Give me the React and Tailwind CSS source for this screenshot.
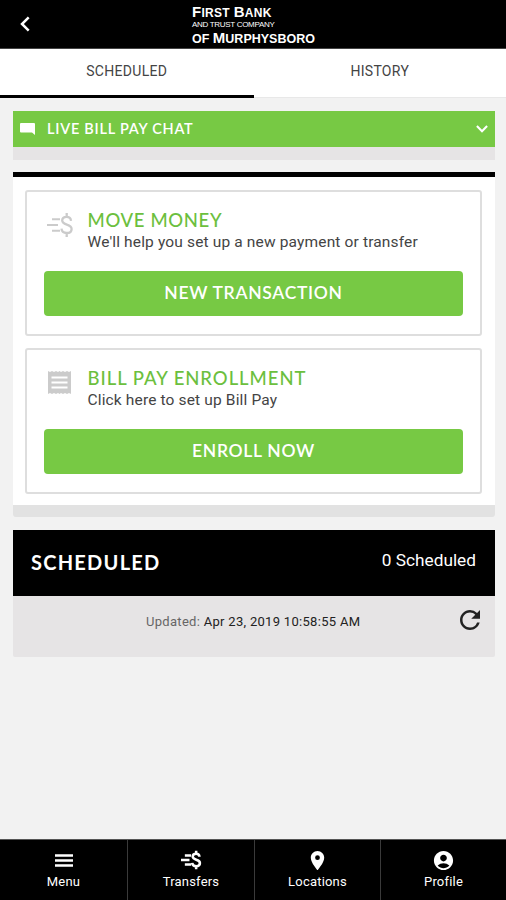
import React from "react";
import { MdRefresh, MdLocationOn, MdAccountCircle } from "react-icons/md";

const TransferIcon = ({ className, bold }) => (
  <svg viewBox="0 0 28 26" className={className} fill="none" stroke="currentColor">
    <path d="M6 7.2h8M1 13h11M6 18.8h8" strokeWidth={bold ? 3.2 : 1.9} />
    <path
      d="M25 8.800C24.800 6.200 23.100 4.900 20.600 4.900c-2.600 0-4.400 1.400-4.400 3.700 0 5.200 9.400 2.900 9.400 8.300 0 2.500-2 4.100-4.900 4.100-3 0-5-1.500-5.200-4.300M20.700 1v4M20.700 20.800v4.200"
      strokeWidth={bold ? 3.3 : 2.3}
    />
  </svg>
);

const ReceiptIcon = ({ className }) => (
  <svg viewBox="0 0 23 23" className={className}>
    <path
      d="M0 0l2 1 2-1 2 1 2-1 2 1 1.500-1 1.500 1 2-1 2 1 2-1 2 1 2-1v23l-2-1-2 1-2-1-2 1-2-1-1.500 1-1.500-1-2 1-2-1-2 1-2-1-2 1z"
      fill="#cbcbcb"
    />
    <path d="M3.500 6.500h16M3.500 11.500h16M3.500 16.500h16" stroke="#fff" strokeWidth="2.200" />
  </svg>
);

const ChatIcon = ({ className }) => (
  <svg viewBox="0 0 15 12" className={className} fill="currentColor">
    <path d="M1 0h13a1 1 0 0 1 1 1v11l-3-2.500H1a1 1 0 0 1-1-1V1a1 1 0 0 1 1-1z" />
  </svg>
);

const BackIcon = ({ className }) => (
  <svg viewBox="0 0 10 16" className={className} fill="none" stroke="currentColor" strokeWidth="2.500">
    <path d="M8.700 1.300L2 8l6.700 6.700" />
  </svg>
);

const DownIcon = ({ className }) => (
  <svg viewBox="0 0 12 8" className={className} fill="none" stroke="currentColor" strokeWidth="2.100">
    <path d="M0.900 1.100L6 6.200l5.100-5.100" />
  </svg>
);

const MenuIcon = ({ className }) => (
  <svg viewBox="0 0 18 13" className={className} stroke="currentColor" strokeWidth="2.300">
    <path d="M0 1.500h18M0 6.500h18M0 11.500h18" />
  </svg>
);

const ActionCard = ({ icon, title, titleClass, text, button, buttonClass }) => (
  <div className="h-[146px] rounded-[3px] border-2 border-[#dedede] px-[17px] pt-[15px]">
    <div className="flex h-[64px]">
      <div className="w-[43.500px] shrink-0">{icon}</div>
      <div>
        <h2
          className={`font-[Lato,sans-serif] text-[18.500px] leading-[26px] font-medium whitespace-nowrap text-[#6cbf3e] ${titleClass}`}
        >
          {title}
        </h2>
        <p className="text-[15.500px] leading-[18px] tracking-[0.150px] whitespace-nowrap text-[#444]">
          {text}
        </p>
      </div>
    </div>
    <button
      className={`block h-[45px] w-full rounded-[4px] bg-[#77c944] font-[Lato,sans-serif] text-[17.500px] font-semibold text-white ${buttonClass}`}
    >
      {button}
    </button>
  </div>
);

const navItems = [
  { label: "Menu", icon: <MenuIcon className="h-[13px] w-[18px]" /> },
  { label: "Transfers", icon: <TransferIcon bold className="h-[20px] w-[22px]" /> },
  { label: "Locations", icon: <MdLocationOn className="size-[23px]" /> },
  { label: "Profile", icon: <MdAccountCircle className="size-[23px]" /> },
];

const App = () => {
  return (
    <div className="flex h-[900px] w-[506px] flex-col overflow-hidden bg-[#f2f2f2] font-[Roboto,sans-serif]">
      <header className="flex h-[49px] shrink-0 border-b border-[#444] bg-black text-white">
        <div className="w-[192px] pt-[16px] pl-[20px]">
          <BackIcon className="h-[16px] w-[10px]" />
        </div>
        <div className="pt-[5px] font-['Liberation_Sans',sans-serif] font-bold whitespace-nowrap">
          <div className="text-[12px] leading-[14px] tracking-[0.300px]">
            <span className="text-[15px]">F</span>IRST <span className="text-[15px]">B</span>ANK
          </div>
          <div className="text-[8px] leading-[10px] font-normal tracking-[-0.300px]">
            AND TRUST COMPANY
          </div>
          <div className="text-[12.500px] leading-[15px]">
            OF <span className="text-[15px]">M</span>URPHYSBORO
          </div>
        </div>
      </header>

      <nav className="flex h-[49px] shrink-0 border-b border-[#e8e8e8] bg-white text-[14px] tracking-[0.300px] text-[#444]">
        <div className="h-[49px] w-[253.500px] border-b-[3px] border-black pt-[12px] text-center leading-[20px]">
          SCHEDULED
        </div>
        <div className="flex-1 pt-[12px] text-center leading-[20px]">HISTORY</div>
      </nav>

      <main className="flex-1 pt-[13px] pr-[11px] pl-[13px]">
        <div className="flex h-[36px] items-center bg-[#77c944] pr-[7px] pl-[7px] text-white">
          <ChatIcon className="h-[12px] w-[15px]" />
          <span className="ml-[12px] flex-1 pb-px font-[Lato,sans-serif] text-[14.500px] font-semibold tracking-[0.750px]">
            LIVE BILL PAY CHAT
          </span>
          <DownIcon className="h-[8px] w-[12px]" />
        </div>
        <div className="h-[13px] bg-[#e6e4e5]" />

        <section className="mt-[12px] flex h-[333px] flex-col gap-[12px] border-t-[5px] border-black bg-white pt-[13px] pr-[13px] pl-[12px]">
          <ActionCard
            icon={<TransferIcon className="mt-[5px] ml-[2px] h-[26px] w-[28px] text-[#cbcbcb]" />}
            title="MOVE MONEY"
            titleClass="tracking-[0.650px]"
            text="We'll help you set up a new payment or transfer"
            button="NEW TRANSACTION"
            buttonClass="tracking-[0.700px]"
          />
          <ActionCard
            icon={<ReceiptIcon className="mt-[6px] ml-[4px] size-[23px]" />}
            title="BILL PAY ENROLLMENT"
            titleClass="tracking-[0.950px]"
            text="Click here to set up Bill Pay"
            button="ENROLL NOW"
            buttonClass="tracking-[0.700px]"
          />
        </section>
        <div className="h-[12px] rounded-b-[3px] bg-[#e2e2e2]" />

        <section className="mt-[13px]">
          <div className="flex h-[66px] justify-between bg-black pr-[19px] pl-[18px] text-white">
            <h2 className="pt-[18px] font-[Lato,sans-serif] text-[20px] leading-[28px] font-bold tracking-[1.250px]">
              SCHEDULED
            </h2>
            <span className="pt-[18px] text-[17.250px] leading-[24px]">0 Scheduled</span>
          </div>
          <div className="flex h-[61px] rounded-b-[2px] bg-[#e6e4e5] pr-[10px]">
            <p className="flex-1 pt-[16px] pl-[133px] text-[13px] leading-[20px] tracking-[0.300px] whitespace-nowrap text-[#666]">
              Updated: <span className="text-[#222]">Apr 23, 2019 10:58:55 AM</span>
            </p>
            <MdRefresh className="mt-[9px] size-[30px] text-[#222]" />
          </div>
        </section>
      </main>

      <footer className="grid h-[61px] shrink-0 grid-cols-[128px_127px_126px_125px] border-t border-[#555] bg-black text-white">
        {navItems.map(({ label, icon }) => (
          <div
            key={label}
            className="flex flex-col items-center border-r border-[#3a3a3a] pt-[8px] last:border-r-0"
          >
            <div className="flex h-[24px] items-center">{icon}</div>
            <span className="text-[13px] leading-[19px] tracking-[0.200px]">{label}</span>
          </div>
        ))}
      </footer>
    </div>
  );
};

export default App;
